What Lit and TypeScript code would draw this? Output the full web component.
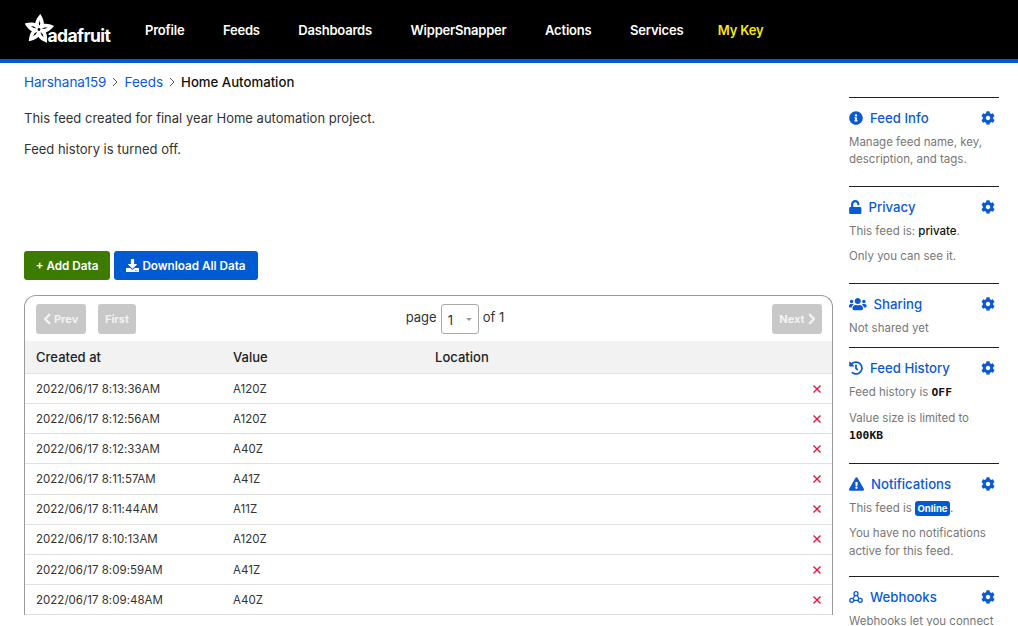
import { LitElement, css, html, svg } from "lit";
import { customElement } from "lit/decorators.js";

const GEAR =
  "M487.4 315.7l-42.6-24.6c4.3-23.2 4.3-47 0-70.2l42.6-24.6c4.9-2.8 7.1-8.6 5.5-14-11.1-35.6-30-67.8-54.7-94.6-3.8-4.1-10-5.1-14.8-2.3L380.8 110c-17.9-15.4-38.5-27.3-60.8-35.1V25.8c0-5.6-3.9-10.5-9.4-11.7-36.7-8.2-74.3-7.8-109.2 0-5.5 1.2-9.4 6.1-9.4 11.7V75c-22.2 7.9-42.8 19.8-60.8 35.1L88.7 85.5c-4.9-2.8-11-1.9-14.8 2.3-24.7 26.7-43.6 58.9-54.7 94.6-1.7 5.4.6 11.2 5.5 14L67.3 221c-4.3 23.2-4.3 47 0 70.2l-42.6 24.6c-4.9 2.8-7.1 8.6-5.5 14 11.1 35.6 30 67.8 54.7 94.6 3.8 4.1 10 5.1 14.8 2.3l42.6-24.6c17.9 15.4 38.5 27.3 60.8 35.1v49.2c0 5.6 3.9 10.5 9.4 11.7 36.7 8.2 74.3 7.8 109.2 0 5.5-1.2 9.4-6.1 9.4-11.7v-49.2c22.2-7.9 42.8-19.8 60.8-35.1l42.6 24.6c4.9 2.8 11 1.9 14.8-2.3 24.7-26.7 43.6-58.9 54.7-94.6 1.5-5.5-.7-11.3-5.6-14.1zM256 336c-44.1 0-80-35.9-80-80s35.9-80 80-80 80 35.9 80 80-35.9 80-80 80z";

const icons = {
  info: svg`<svg viewBox="0 0 512 512" width="14" height="14"><path fill="currentColor" d="M256 8C119.043 8 8 119.083 8 256c0 136.997 111.043 248 248 248s248-111.003 248-248C504 119.083 392.957 8 256 8zm0 110c23.196 0 42 18.804 42 42s-18.804 42-42 42-42-18.804-42-42 18.804-42 42-42zm56 254c0 6.627-5.373 12-12 12h-88c-6.627 0-12-5.373-12-12v-24c0-6.627 5.373-12 12-12h12v-64h-12c-6.627 0-12-5.373-12-12v-24c0-6.627 5.373-12 12-12h64c6.627 0 12 5.373 12 12v100h12c6.627 0 12 5.373 12 12v24z"/></svg>`,
  unlock: svg`<svg viewBox="0 0 448 512" width="12.5" height="14"><path fill="currentColor" d="M400 256H152V152.9c0-39.6 31.7-72.5 71.3-72.9 40-.4 72.7 32.1 72.7 72v16c0 13.3 10.7 24 24 24h32c13.3 0 24-10.7 24-24v-16C376 68 307.5-.3 223.5 0 139.5.3 72 69.5 72 153.5V256H48c-26.5 0-48 21.5-48 48v160c0 26.5 21.5 48 48 48h352c26.5 0 48-21.5 48-48V304c0-26.5-21.5-48-48-48z"/></svg>`,
  users: svg`<svg viewBox="0 0 640 512" width="17.5" height="14"><path fill="currentColor" d="M96 224c35.3 0 64-28.7 64-64s-28.7-64-64-64-64 28.7-64 64 28.7 64 64 64zm448 0c35.3 0 64-28.7 64-64s-28.7-64-64-64-64 28.7-64 64 28.7 64 64 64zm32 32h-64c-17.6 0-33.5 7.1-45.1 18.6 40.3 22.1 68.9 62 75.1 109.4h66c17.7 0 32-14.3 32-32v-32c0-35.3-28.7-64-64-64zm-256 0c61.9 0 112-50.1 112-112S381.9 32 320 32 208 82.1 208 144s50.1 112 112 112zm76.8 32h-8.3c-20.8 10-43.9 16-68.5 16s-47.6-6-68.5-16h-8.3C179.6 288 128 339.6 128 403.2V432c0 26.5 21.5 48 48 48h288c26.5 0 48-21.5 48-48v-28.8c0-63.6-51.6-115.2-115.2-115.2zm-223.7-13.4C161.5 263.1 145.6 256 128 256H64c-35.3 0-64 28.7-64 64v32c0 17.7 14.3 32 32 32h65.9c6.3-47.4 34.9-87.3 75.2-109.4z"/></svg>`,
  history: svg`<svg viewBox="0 0 512 512" width="14" height="14"><path fill="currentColor" d="M504 255.531c.253 136.64-111.18 248.372-247.82 248.468-59.015.042-113.223-20.53-155.822-54.911-11.077-8.94-11.905-25.541-1.839-35.607l11.267-11.267c8.609-8.609 22.353-9.551 31.891-1.984C173.062 425.135 212.781 440 256 440c101.705 0 184-82.311 184-184 0-101.705-82.311-184-184-184-48.814 0-93.149 18.969-126.068 49.932l50.754 50.754c10.08 10.08 2.941 27.314-11.313 27.314H24c-8.837 0-16-7.163-16-16V38.627c0-14.254 17.234-21.393 27.314-11.314l49.372 49.372C129.209 34.136 189.552 8 256 8c136.81 0 247.747 110.78 248 247.531zm-180.912 78.784l9.823-12.63c8.138-10.463 6.253-25.542-4.21-33.679L288 256.349V152c0-13.255-10.745-24-24-24h-16c-13.255 0-24 10.745-24 24v135.651l65.409 50.874c10.463 8.137 25.541 6.253 33.679-4.21z"/></svg>`,
  warning: svg`<svg viewBox="0 0 576 512" width="15" height="14"><path fill="currentColor" d="M569.517 440.013C587.975 472.007 564.806 512 527.94 512H48.054c-36.937 0-59.999-40.055-41.577-71.987L246.423 24c18.467-32.009 64.72-31.951 83.154 0l239.94 416.013zM288 354c-25.405 0-46 20.595-46 46s20.595 46 46 46 46-20.595 46-46-20.595-46-46-46zm-43.673-165.346l7.418 136c.347 6.364 5.609 11.346 11.982 11.346h48.546c6.373 0 11.635-4.982 11.982-11.346l7.418-136c.375-6.874-5.098-12.654-11.982-12.654h-63.383c-6.884 0-12.356 5.78-11.981 12.654z"/></svg>`,
  webhook: svg`<svg viewBox="0 0 16 16" width="14" height="14" fill="none" stroke="currentColor" stroke-width="1.5"><circle cx="8" cy="4.2" r="2.3"/><circle cx="3.2" cy="11.8" r="2.3"/><circle cx="12.8" cy="11.8" r="2.3"/><path d="M6.9 6.2 4.4 10M5.5 11.8h5M9.1 6.2 11.6 10"/></svg>`,
};

const rows = [
  ["2022/06/17 8:13:36AM", "A120Z"],
  ["2022/06/17 8:12:56AM", "A120Z"],
  ["2022/06/17 8:12:33AM", "A40Z"],
  ["2022/06/17 8:11:57AM", "A41Z"],
  ["2022/06/17 8:11:44AM", "A11Z"],
  ["2022/06/17 8:10:13AM", "A120Z"],
  ["2022/06/17 8:09:59AM", "A41Z"],
  ["2022/06/17 8:09:48AM", "A40Z"],
];

const petals = [0, 72, 144, 216, 288];

@customElement("app-root")
export class AppRoot extends LitElement {
  public static styles = css`
    :host {
      display: block;
      height: 626px;
      overflow: hidden;
      background: #fff;
      color: #222;
      font-family: Inter, "Liberation Sans", sans-serif;
      font-size: 13px;
    }

    a {
      color: #0b5ad4;
      text-decoration: none;
    }

    .topbar {
      display: flex;
      align-items: center;
      height: 59px;
      padding-left: 24px;
      background: #000;
      border-bottom: 4px solid #005ad2;
    }

    .logo {
      position: relative;
      flex: none;
      width: 121px;
      height: 31px;
      margin-top: -1px;
      color: #fff;
    }

    .logo svg {
      display: block;
    }

    .logo span {
      position: absolute;
      left: 23.5px;
      bottom: 0;
      font-size: 17.5px;
      font-weight: 700;
      line-height: 18px;
      letter-spacing: -0.6px;
      text-shadow: -1px 0 #000;
    }

    .nav {
      display: flex;
      gap: 38.5px;
      color: #fff;
      font-size: 13px;
      font-weight: 600;
      letter-spacing: -0.2px;
    }

    .nav .key {
      margin-left: -4px;
      color: #f8e51b;
    }

    .layout {
      display: grid;
      grid-template-columns: 809px 150px;
      gap: 16px;
      padding-left: 24px;
    }

    .crumbs {
      display: flex;
      align-items: center;
      height: 20px;
      margin: 9px 0 18px;
      gap: 6px;
      font-size: 13.5px;
    }

    .crumbs b {
      font-size: 13.2px;
      font-weight: 500;
      color: #111;
    }

    .crumbs svg {
      color: #555;
    }

    .intro {
      height: 141px;
      color: #333;
      font-size: 13px;
    }

    .intro p {
      margin: 0 0 15px;
      line-height: 16px;
    }

    .actions {
      display: flex;
      gap: 4px;
      margin-bottom: 15px;
    }

    .btn {
      display: flex;
      align-items: center;
      justify-content: center;
      gap: 3px;
      height: 29px;
      border-radius: 3px;
      color: #fff;
      font-size: 11.7px;
      font-weight: 600;
    }

    .btn.add {
      width: 86px;
      background: #3d7a00;
    }

    .btn.dl {
      width: 144px;
      background: #005ad2;
    }

    .card {
      border: 1px solid #999;
      border-bottom: 0;
      border-radius: 12px 12px 0 0;
    }

    .pager {
      display: grid;
      grid-template-columns: 1fr auto 1fr;
      align-items: center;
      height: 45px;
      padding: 0 10px 0 11px;
    }

    .pager-left {
      display: flex;
      gap: 12px;
    }

    .pager-right {
      display: flex;
      justify-content: flex-end;
    }

    .ghost {
      display: flex;
      align-items: center;
      justify-content: center;
      gap: 3px;
      height: 30px;
      border-radius: 3px;
      background: #c8c8c8;
      color: #f2f2f2;
      font-size: 11px;
      font-weight: 700;
    }

    .ghost.nav-btn {
      width: 50px;
    }

    .ghost.first {
      width: 38px;
    }

    .page {
      display: flex;
      align-items: flex-start;
      gap: 4px;
      margin-left: 52px;
      color: #333;
      font-size: 13px;
      line-height: 26px;
    }

    .select {
      position: relative;
      box-sizing: border-box;
      width: 38px;
      height: 30px;
      padding: 2px 0 0 6px;
      border: 1px solid #aaa;
      border-radius: 3px;
    }

    .select::after {
      content: "";
      position: absolute;
      right: 6px;
      top: 13px;
      border: 3px solid transparent;
      border-top-color: #999;
    }

    .row {
      display: grid;
      grid-template-columns: 197px 202px 1fr 19px;
      align-items: center;
      box-sizing: border-box;
      height: 30.14px;
      padding: 0.6px 0 0 11px;
      border-bottom: 1px solid #e2e2e2;
      color: #333;
      font-size: 11.5px;
      letter-spacing: 0.03px;
    }

    .row.head {
      height: 33px;
      padding-top: 0;
      background: #f2f2f2;
      color: #222;
      font-size: 13px;
      font-weight: 500;
    }

    .row svg {
      display: block;
      color: #e0143c;
    }

    .side {
      padding-top: 34px;
    }

    .side section {
      border-top: 1px solid #222;
      box-sizing: border-box;
      padding-top: 10px;
    }

    .side .s-info {
      height: 89px;
    }

    .side .s-privacy {
      height: 97px;
    }

    .side .s-sharing {
      height: 64px;
    }

    .side .s-history {
      height: 116px;
    }

    .side .s-notify {
      height: 113px;
    }

    .side h3 {
      display: flex;
      align-items: center;
      gap: 7px;
      height: 20px;
      margin: 0 0 6px;
      color: #0b5ad4;
      font-size: 13.2px;
      font-weight: 500;
    }

    .side h3 .gear {
      margin-left: auto;
      margin-right: 4px;
    }

    .side p {
      margin: 0 0 8px;
      color: #777;
      font-size: 11.5px;
      line-height: 17px;
    }

    .side .s-history p + p {
      margin-top: 9px;
    }

    .side .s-notify p {
      margin-bottom: 7px;
    }

    .side .s-notify p + p {
      line-height: 18px;
    }

    .side strong {
      color: #111;
      font-weight: 500;
    }

    .side code {
      color: #111;
      font-family: "DejaVu Sans Mono", monospace;
      font-size: 11.3px;
      font-weight: 700;
    }

    .badge {
      display: inline-block;
      padding: 0 2.5px;
      border-radius: 3px;
      background: #005ad2;
      color: #fff;
      font-size: 9.5px;
      font-weight: 700;
      line-height: 15px;
    }
  `;

  private renderLogo() {
    return html`<div class="logo">
      <svg viewBox="0 0 31 31" width="31" height="31">
        <g transform="translate(15 15.5) rotate(5)">
          ${petals.map(
            (a) => svg`<path transform="rotate(${a})" fill="#fff" d="M0 1C-6-2-5.5-8.5 0-15.5 5.5-8.5 6-2 0 1Z"/>
              <path transform="rotate(${a + 36})" fill="#fff" d="M0 0-3-3 0-7.5 3-3Z"/>
              <path transform="rotate(${a})" fill="#000" d="M0-2.5-.7-6 0-9 .7-6Z"/>`
          )}
          <circle r="1.4" fill="#000" />
        </g>
      </svg>
      <span>adafruit</span>
    </div>`;
  }

  private chevron(dir: "left" | "right", size = 10) {
    const d = dir === "left" ? "M7 1 3 5 7 9" : "M3 1 7 5 3 9";
    return html`<svg viewBox="2 0 6 10" width=${size * 0.6} height=${size} fill="none" stroke="currentColor" stroke-width=${size > 10 ? 2 : 1}>
      <path d=${d} />
    </svg>`;
  }

  private sideHead(icon: unknown, title: string) {
    return html`<h3>
      ${icon}<span>${title}</span>
      <svg class="gear" viewBox="0 0 512 512" width="14" height="14"><path fill="currentColor" d=${GEAR} /></svg>
    </h3>`;
  }

  public render() {
    return html`
      <header class="topbar">
        ${this.renderLogo()}
        <nav class="nav">
          <span>Profile</span>
          <span>Feeds</span>
          <span>Dashboards</span>
          <span>WipperSnapper</span>
          <span>Actions</span>
          <span>Services</span>
          <span class="key">My Key</span>
        </nav>
      </header>
      <div class="layout">
        <main>
          <div class="crumbs">
            <a href="#">Harshana159</a>${this.chevron("right")}<a href="#">Feeds</a>${this.chevron("right")}<b>Home Automation</b>
          </div>
          <div class="intro">
            <p>This feed created for final year Home automation project.</p>
            <p>Feed history is turned off.</p>
          </div>
          <div class="actions">
            <div class="btn add">+ Add Data</div>
            <div class="btn dl">
              <svg viewBox="0 0 512 512" width="13" height="13"><path fill="currentColor" d="M216 0h80c13.3 0 24 10.7 24 24v168h87.7c17.8 0 26.7 21.5 14.1 34.1L269.7 378.3c-7.5 7.5-19.8 7.5-27.3 0L90.1 226.1c-12.6-12.6-3.7-34.1 14.1-34.1H192V24c0-13.3 10.7-24 24-24zm296 376v112c0 13.3-10.7 24-24 24H24c-13.3 0-24-10.7-24-24V376c0-13.3 10.7-24 24-24h146.7l49 49c20.1 20.1 52.5 20.1 72.6 0l49-49H488c13.3 0 24 10.7 24 24zm-124 88c0-11-9-20-20-20s-20 9-20 20 9 20 20 20 20-9 20-20zm64 0c0-11-9-20-20-20s-20 9-20 20 9 20 20 20 20-9 20-20z"/></svg>
              Download All Data
            </div>
          </div>
          <div class="card">
            <div class="pager">
              <div class="pager-left">
                <div class="ghost nav-btn">${this.chevron("left", 12)}Prev</div>
                <div class="ghost first">First</div>
              </div>
              <div class="page">page <div class="select">1</div> of 1</div>
              <div class="pager-right">
                <div class="ghost nav-btn">Next${this.chevron("right", 12)}</div>
              </div>
            </div>
            <div class="row head">
              <span>Created at</span><span>Value</span><span>Location</span><span></span>
            </div>
            ${rows.map(
              ([at, value]) => html`<div class="row">
                <span>${at}</span><span>${value}</span><span></span>
                <svg viewBox="0 0 8 8" width="8" height="8" fill="none" stroke="currentColor" stroke-width="1.4"><path d="M.5.5l7 7M7.5.5l-7 7" /></svg>
              </div>`
            )}
          </div>
        </main>
        <aside class="side">
          <section class="s-info">
            ${this.sideHead(icons.info, "Feed Info")}
            <p>Manage feed name, key, description, and tags.</p>
          </section>
          <section class="s-privacy">
            ${this.sideHead(icons.unlock, "Privacy")}
            <p>This feed is: <strong>private</strong>.</p>
            <p>Only you can see it.</p>
          </section>
          <section class="s-sharing">
            ${this.sideHead(icons.users, "Sharing")}
            <p>Not shared yet</p>
          </section>
          <section class="s-history">
            ${this.sideHead(icons.history, "Feed History")}
            <p>Feed history is <code>OFF</code></p>
            <p>Value size is limited to <code>100KB</code></p>
          </section>
          <section class="s-notify">
            ${this.sideHead(icons.warning, "Notifications")}
            <p>This feed is <span class="badge">Online</span>.</p>
            <p>You have no notifications active for this feed.</p>
          </section>
          <section>
            ${this.sideHead(icons.webhook, "Webhooks")}
            <p>Webhooks let you connect</p>
          </section>
        </aside>
      </div>
    `;
  }
}
